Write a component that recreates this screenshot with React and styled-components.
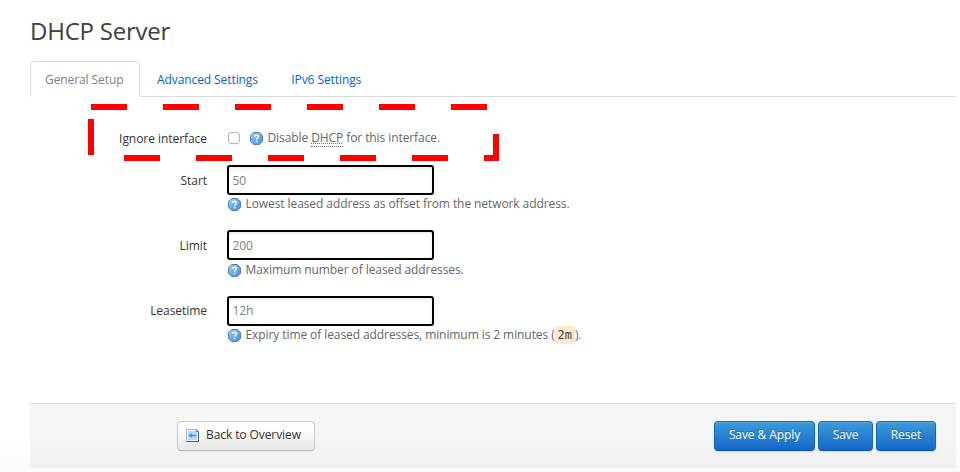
import React from "react";
import styled, { createGlobalStyle, css } from "styled-components";

const GlobalStyle = createGlobalStyle`
  * { box-sizing: border-box; }
  body {
    margin: 0;
    background: #fff;
    color: #404040;
    font-family: "Open Sans", "Noto Sans", sans-serif;
    font-size: 12px;
    line-height: 18px;
    letter-spacing: -0.085px;
  }
`;

const Page = styled.main`
  position: relative;
  width: 960px;
  height: 472px;
  padding: 13px 4px 0 30px;
  overflow: hidden;
  background: linear-gradient(#fff 440px, #fafafa 472px);
`;

const Title = styled.h1`
  height: 36px;
  margin: 0 0 12px;
  font-size: 24px;
  font-weight: 400;
  line-height: 36px;
  letter-spacing: -0.22px;
  color: #404040;
`;

const Tabs = styled.nav`
  display: flex;
  height: 36px;
  border-bottom: 1px solid #ddd;
`;

const Tab = styled.a`
  height: 36px;
  margin-right: 2px;
  padding: 0 14.7px;
  border: 1px solid transparent;
  line-height: 35px;
  color: #0064d2;
  text-decoration: none;
  white-space: nowrap;
  ${(p) =>
    p.$active &&
    css`
      margin-right: 1px;
      border-color: #ddd #ddd #fff;
      border-radius: 4px 4px 0 0;
      background: #fff;
      color: #808080;
      padding: 0 15.8px 0 14px;
    `}
`;

const Form = styled.form`
  height: 306px;
  padding-top: 29px;
`;

const Field = styled.div`
  display: grid;
  grid-template-columns: 177px 1fr;
  column-gap: 20px;
  height: ${(p) => p.$height}px;
`;

const Label = styled.label`
  padding-top: ${(p) => p.$top}px;
  text-align: right;
  letter-spacing: -0.05px;
  color: #333;
`;

const TextInput = styled.input`
  display: block;
  width: 207px;
  height: 30px;
  margin: -1px 0 0;
  padding: 0 3.5px;
  border: 2px solid #000;
  border-radius: 3px;
  outline: none;
  background: #fff;
  box-shadow: inset 0 2px 3px rgba(0, 0, 0, 0.08);
  font: inherit;
  letter-spacing: inherit;
  color: #808080;
`;

const Hint = styled.div`
  display: flex;
  align-items: flex-start;
  height: 18px;
  margin-top: 0.2px;
  padding-left: 0.5px;
  color: #666;
  white-space: pre;

  svg { margin: 3px 5px 0 0; flex: none; }
`;

const CheckLine = styled.div`
  display: flex;
  align-items: flex-start;
  padding-left: 1px;
`;

const Checkbox = styled.input`
  appearance: none;
  width: 12px;
  height: 12px;
  margin: 6px 9px 0 0;
  border: 1px solid #b4b4b4;
  border-radius: 3px;
  background: #fff;
`;

const CheckHint = styled(Hint)`
  margin-top: 3px;
`;

const Abbr = styled.abbr`
  height: 18px;
  border-bottom: 1px dotted #666;
  text-decoration: underline dotted #777 1px;
  text-underline-offset: 1px;
`;

const Code = styled.code`
  height: 18px;
  padding: 0 3px;
  border-radius: 3px;
  background: #fee9cc;
  color: #404040;
  font: 12px/18px "DejaVu Sans Mono", monospace;
`;

const Actions = styled.footer`
  display: flex;
  align-items: flex-start;
  gap: 3px;
  height: 65px;
  padding: 17px 20px 0 147px;
  border-top: 1px solid #ddd;
  border-radius: 0 0 3px 3px;
  background: linear-gradient(#f5f5f5 50%, #f0f0f0);
`;

const Button = styled.button`
  display: flex;
  align-items: center;
  justify-content: center;
  width: ${(p) => p.$width}px;
  height: 30px;
  padding: 0 0 2px;
  border: 1px solid;
  border-color: #ccc #ccc #bbb;
  border-radius: 4px;
  background: linear-gradient(#fff 25%, #e6e6e6);
  box-shadow: 0 1px 2px rgba(0, 0, 0, 0.05);
  color: #333;
  font: inherit;
  letter-spacing: inherit;
  white-space: nowrap;
  ${(p) =>
    p.$primary &&
    css`
      border-color: #1c6fbd #1465bb #0c50a4;
      background: linear-gradient(#3d9bd9, #1467cb);
      box-shadow: inset 0 1px 0 rgba(255, 255, 255, 0.12), 0 1px 2px rgba(0, 0, 0, 0.1);
      color: #fff;
      text-shadow: 0 -1px 0 rgba(0, 0, 0, 0.25);
    `}
`;

const BackButton = styled(Button)`
  justify-content: flex-start;
  margin-right: auto;
  padding-left: 6.5px;
  svg { margin: 1px 6.5px 0 0; }
`;

const Marker = styled.svg`
  position: absolute;
  left: 88px;
  top: 104px;
  pointer-events: none;
`;

function HelpIcon() {
  return (
    <svg width="13" height="13" viewBox="0 0 13 13">
      <defs>
        <linearGradient id="help" x1="0" y1="0" x2="1" y2="1">
          <stop offset="0" stopColor="#a8d4f8" />
          <stop offset=".5" stopColor="#69abe8" />
          <stop offset="1" stopColor="#4c90d8" />
        </linearGradient>
      </defs>
      <path d="M3.700.5h5.600l3.200 3.200v5.600l-3.200 3.200H3.700L.5 9.300V3.700z" fill="url(#help)" stroke="#4d7fb4" />
      <path d="M4.600 5C4.600 2.700 8.500 2.700 8.500 4.800 8.500 6.100 6.600 6.100 6.600 7.700M6.600 8.800v1.500" fill="none" stroke="#fff" strokeWidth="1.5" />
    </svg>
  );
}

function BackIcon() {
  return (
    <svg width="15" height="15" viewBox="0 0 15 15">
      <path d="M1.500 1.500h10l2 2v10h-12z" fill="#f1f8ff" stroke="#9dbbdc" />
      <path d="M13.500 3.500v10h-12" fill="none" stroke="#465f80" />
      <path d="M3 3h8l1 1v8H3z" fill="#b5d8fb" />
      <path d="M3.500 7.500l3.300-2.800v2H11v1.600H6.800v2z" fill="#4e8fdd" />
      <path d="M11 1l3 3h-3z" fill="#5a84b4" />
    </svg>
  );
}

function DashedMarker() {
  return (
    <Marker width="411" height="57" fill="none" stroke="#f00" strokeWidth="6">
      <path d="M3 3H399" strokeDasharray="36 36" />
      <path d="M3 15V51" />
      <path d="M36 54H411" strokeDasharray="36 36" />
      <path d="M408 30V57" />
    </Marker>
  );
}

const fields = [
  { name: "Start", value: "50", hint: "Lowest leased address as offset from the network address." },
  { name: "Limit", value: "200", hint: "Maximum number of leased addresses." },
  {
    name: "Leasetime",
    value: "12h",
    hint: (
      <>
        Expiry time of leased addresses, minimum is 2 minutes (<Code>2m</Code>).
      </>
    ),
  },
];

export default function App() {
  return (
    <>
      <GlobalStyle />
      <Page>
        <Title>DHCP Server</Title>
        <Tabs>
          <Tab $active>General Setup</Tab>
          <Tab>Advanced Settings</Tab>
          <Tab>IPv6 Settings</Tab>
        </Tabs>
        <Form>
          <Field $height={40}>
            <Label $top={4} htmlFor="ignore">Ignore interface</Label>
            <CheckLine>
              <Checkbox type="checkbox" id="ignore" />
              <CheckHint>
                <HelpIcon />
                Disable <Abbr>DHCP</Abbr> for this interface.
              </CheckHint>
            </CheckLine>
          </Field>
          {fields.map((f) => (
            <Field $height={65.4} key={f.name}>
              <Label $top={5.6} htmlFor={f.name}>{f.name}</Label>
              <div>
                <TextInput id={f.name} defaultValue={f.value} />
                <Hint>
                  <HelpIcon />
                  {f.hint}
                </Hint>
              </div>
            </Field>
          ))}
        </Form>
        <Actions>
          <BackButton type="button" $width={138}>
            <BackIcon />
            Back to Overview
          </BackButton>
          <Button type="button" $primary $width={101}>Save &amp; Apply</Button>
          <Button type="button" $primary $width={55}>Save</Button>
          <Button type="button" $primary $width={60}>Reset</Button>
        </Actions>
        <DashedMarker />
      </Page>
    </>
  );
}
